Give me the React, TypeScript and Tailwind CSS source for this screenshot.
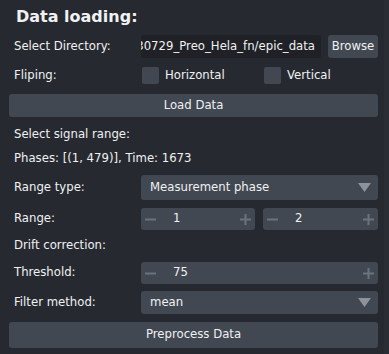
import React from "react";

const Minus = () => (
  <svg width="11" height="11" viewBox="0 0 11 11">
    <rect x="0" y="4.5" width="11" height="2" fill="#6c727b" />
  </svg>
);

const Plus = () => (
  <svg width="11" height="11" viewBox="0 0 11 11">
    <rect x="0" y="4.5" width="11" height="2" fill="#6c727b" />
    <rect x="4.5" y="0" width="2" height="11" fill="#6c727b" />
  </svg>
);

const Arrow = () => (
  <svg width="13" height="9" viewBox="0 0 13 9">
    <polygon points="0,0 13,0 6.5,9" fill="#8e939b" />
  </svg>
);

const Label = ({ children }: { children: React.ReactNode }) => (
  <span className="pl-[5px] w-[132px] shrink-0">{children}</span>
);

const Spin = ({ value, className }: { value: string; className: string }) => (
  <div className={`flex items-center bg-[#414851] rounded-[3px] h-[22px] px-[4px] ${className}`}>
    <Minus />
    <span className="ml-[17px] flex-1">{value}</span>
    <Plus />
  </div>
);

const Combo = ({ value, className }: { value: string; className: string }) => (
  <div className={`flex flex-1 items-center justify-between bg-[#414851] rounded-[3px] pl-[9px] pr-[7px] ${className}`}>
    <span>{value}</span>
    <Arrow />
  </div>
);

export default function App() {
  return (
    <div
      className="flex w-[389px] h-[354px] bg-[#262930] text-[#f0f1f2] text-[11.7px] overflow-hidden"
      style={{ fontFamily: '"DejaVu Sans", sans-serif' }}
    >
      <div className="flex flex-col w-[384px] pl-[9px] pr-[6px]">
        <div className="h-[26px] mt-[4px] flex items-center pl-[7px] text-[16px] font-bold">
          Data loading:
        </div>

        <div className="flex items-center h-[23px] mt-[5px]">
          <Label>Select Directory:</Label>
          <div className="relative w-[180px] h-full bg-[#1f2126] rounded-[3px] overflow-hidden">
            <div className="absolute right-[6px] top-0 h-full flex items-center whitespace-nowrap">
              /home/user/data/20230729_Preo_Hela_fn/epic_data
            </div>
          </div>
          <div className="ml-[7px] flex-1 h-full flex items-center justify-center bg-[#414851] rounded-[3px]">
            Browse
          </div>
        </div>

        <div className="flex items-center h-[23px] mt-[6px]">
          <Label>Fliping:</Label>
          <div className="w-[17px] h-[17px] ml-[1px] bg-[#414851] rounded-[2px]" />
          <span className="ml-[6px] w-[99px]">Horizontal</span>
          <div className="w-[17px] h-[17px] bg-[#414851] rounded-[2px]" />
          <span className="ml-[6px]">Vertical</span>
        </div>

        <div className="flex items-center justify-center h-[23px] mt-[7px] bg-[#414851] rounded-[3px]">
          Load Data
        </div>

        <div className="flex items-center h-[24px] mt-[6px]">
          <Label>Select signal range:</Label>
        </div>

        <div className="flex items-center h-[24px]">
          <span className="pl-[5px]">Phases: [(1, 479)], Time: 1673</span>
        </div>

        <div className="flex items-center h-[25px] mt-[4px]">
          <Label>Range type:</Label>
          <Combo value="Measurement phase" className="h-full" />
        </div>

        <div className="flex items-center h-[22px] mt-[8px]">
          <Label>Range:</Label>
          <Spin value="1" className="w-[114px]" />
          <Spin value="2" className="ml-[8px] flex-1" />
        </div>

        <div className="flex items-center h-[22px] mt-[5px]">
          <Label>Drift correction:</Label>
        </div>

        <div className="flex items-center h-[22px] mt-[5px]">
          <Label>Threshold:</Label>
          <Spin value="75" className="flex-1" />
        </div>

        <div className="flex items-center h-[23px] mt-[7px]">
          <Label>Filter method:</Label>
          <Combo value="mean" className="h-full" />
        </div>

        <div className="flex items-center justify-center h-[26px] mt-[8px] bg-[#414851] rounded-[3px]">
          Preprocess Data
        </div>
      </div>
      <div className="w-[5px] bg-[#2a2d34]" />
    </div>
  );
}
